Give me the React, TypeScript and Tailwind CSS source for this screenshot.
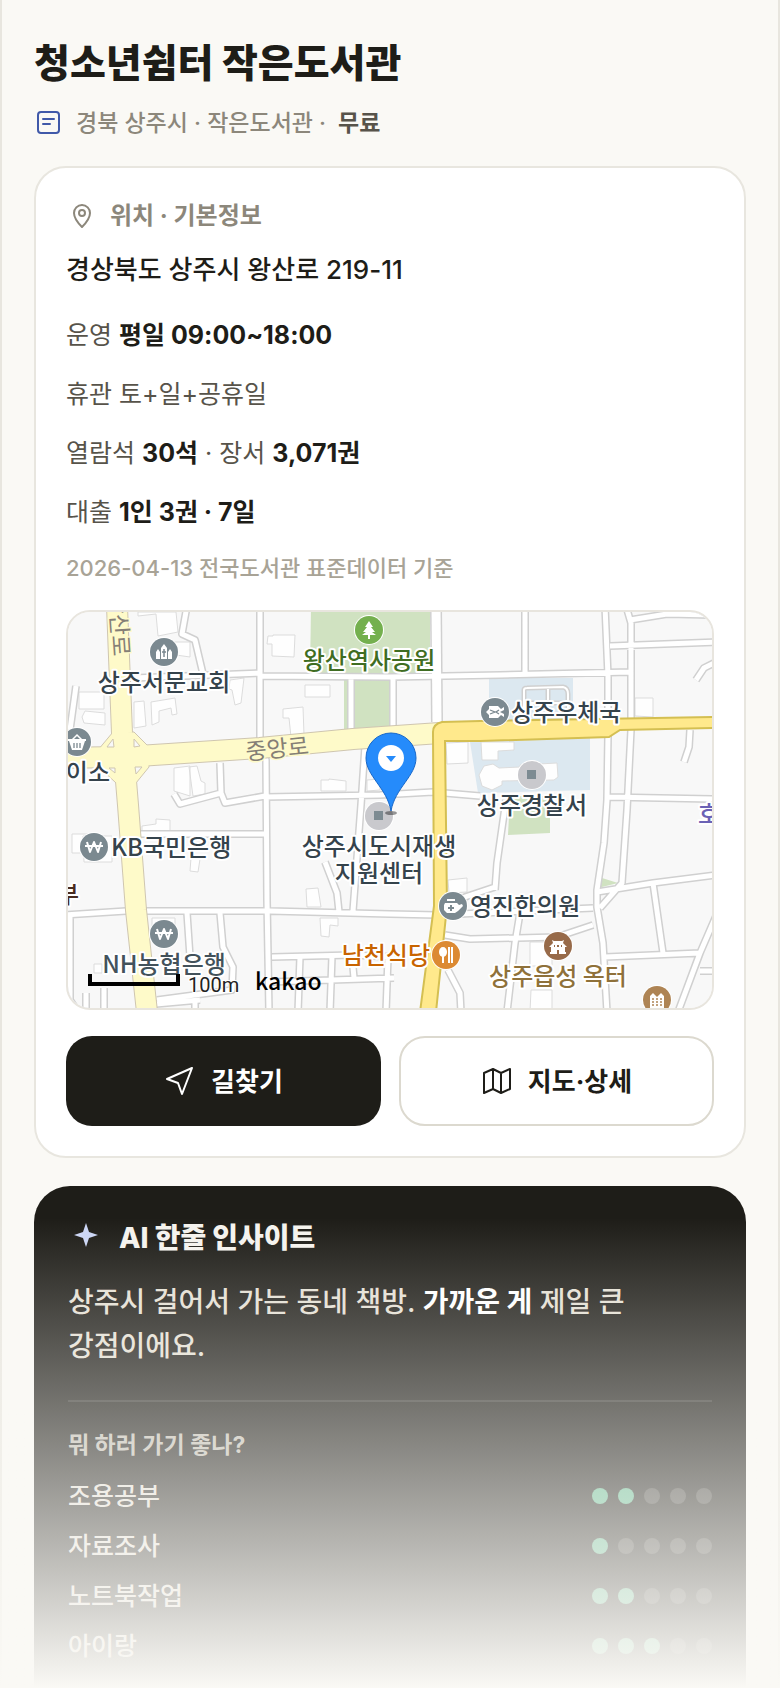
import type { ReactNode } from 'react'

const infoRows: ReactNode[] = [
  <>운영 <b className="font-bold text-[#1e1d18]">평일 09:00~18:00</b></>,
  <>휴관 토+일+공휴일</>,
  <>열람석 <b className="font-bold text-[#1e1d18]">30석</b> · 장서 <b className="font-bold text-[#1e1d18]">3,071권</b></>,
  <>대출 <b className="font-bold text-[#1e1d18]">1인 3권 · 7일</b></>,
]

const ratings = [
  { label: '조용공부', score: 2 },
  { label: '자료조사', score: 1 },
  { label: '노트북작업', score: 2 },
  { label: '아이랑', score: 3 },
]

/* Map data */

const minorRoads = [
  'M260 606V738L266 760L267 900L269 1012',
  'M133 678L260 673M260 676L390 677L500 675L631 672',
  'M187 606L182 634L195 640L203 674',
  'M76 686L70 730',
  'M351 678V730M393 678V726',
  'M525 606V674',
  'M605 606L608 676V735L607 800L604 843L597 890V907L603 943L607 1012',
  'M626 606L631 623V730L627 810L622 883L600 908',
  'M630 620L667 614L712 615',
  'M610 646L716 642',
  'M265 797L380 795L433 792L480 796',
  'M608 797L716 799',
  'M696 680L704 668L716 662M690 730L689 747L684 762',
  'M220 763L221 793L225 803L265 796M221 793L180 804L174 794',
  'M365 746L361 805L353 911',
  'M140 834H267',
  'M64 915L126 911L270 911L390 914L437 915L593 908',
  'M187 913L190 957M220 913L223 947L233 967L232 990L157 1000',
  'M325 862L337 893L339 912',
  'M272 957L352 955L394 957M300 957L298 1012M332 956L330 1012M352 956L354 978M388 957L386 1012M269 982L394 978',
  'M156 1004L200 1000M195 1000V1012',
  'M70 916V1000L78 1012M86 993V1012M104 988V1012',
  'M445 935L470 939L557 937L593 925',
  'M520 913L515 943L507 1012',
  'M506 800L497 863L495 890M495 887L465 897L455 908',
  'M448 970L460 993L461 1012',
  'M597 892L653 883L716 875M653 883L663 953',
  'M605 957L700 953M716 916L700 953L678 1012M700 971H716',
]

const buildings = [
  'M138 612V616L156 614L158 636L178 632L176 612Z',
  'M79 692H104V709H79ZM85 711L105 713V725L84 723L82 717Z',
  'M173 642H190V657L176 655Z',
  'M268 636H273V635H295L294 657L272 656V644H267Z',
  'M305 685H330V697H305Z',
  'M134 702L144 701L146 726L134 728Z',
  'M151 702L175 698L177 714L172 715L171 708L159 711V722L152 725Z',
  'M230 680L244 678L241 703L235 705L232 690L229 689Z',
  'M283 709L303 707L304 735L291 737L289 718H283Z',
  'M174 768L190 766V796L174 791ZM189 767L197 766L201 781L205 783V794L193 796Z',
  'M321 780H329V779L346 781V791H321Z',
  'M367 780L380 779V790L367 791Z',
  'M72 834H88V853H72ZM83 836H112V862H84Z',
  'M142 826L156 824V819L170 820V831H142Z',
  'M191 858L200 859L198 872L190 871Z',
  'M306 889L318 888L321 907H307Z',
  'M320 918H338V926L330 925L329 937L321 936Z',
  'M94 964H102V973H94Z',
  'M152 918H175V940H152Z',
  'M446 743L468 742V763L447 764Z',
  'M481 742H514V750L498 751V760H482Z',
  'M479 775L484 766L493 764L499 768L520 767V765L557 763L558 777L554 780L502 781V785L492 790L482 786Z',
  'M448 880L467 878V892L449 893Z',
  'M635 698H653V717L635 716Z',
  'M530 942H552V966H530ZM531 990H552V1012H530Z',
]

type PlaceKind = 'church' | 'tree' | 'basket' | 'post' | 'square' | 'won' | 'clinic' | 'food' | 'castle' | 'building'

const places: { x: number; y: number; color: string; kind: PlaceKind }[] = [
  { x: 164, y: 652, color: '#7b8990', kind: 'church' },
  { x: 369, y: 630, color: '#74b04e', kind: 'tree' },
  { x: 77, y: 742, color: '#7b8990', kind: 'basket' },
  { x: 495, y: 712, color: '#7b8990', kind: 'post' },
  { x: 532, y: 775, color: '#c9c9cd', kind: 'square' },
  { x: 94, y: 847, color: '#7b8990', kind: 'won' },
  { x: 379, y: 816, color: '#c9c9cd', kind: 'square' },
  { x: 164, y: 934, color: '#7b8990', kind: 'won' },
  { x: 453, y: 906, color: '#7b8990', kind: 'clinic' },
  { x: 446, y: 955, color: '#dc8a33', kind: 'food' },
  { x: 558, y: 946, color: '#976a49', kind: 'castle' },
  { x: 657, y: 1000, color: '#ae8454', kind: 'building' },
]

const labels: { x: number; y: number; text: string; color?: string; anchor?: 'start' | 'middle' | 'end' }[] = [
  { x: 164, y: 691, text: '상주서문교회' },
  { x: 369, y: 669, text: '왕산역사공원', color: '#3f6d22' },
  { x: 110, y: 781, text: '이소', anchor: 'end' },
  { x: 511, y: 721, text: '상주우체국', anchor: 'start' },
  { x: 532, y: 814, text: '상주경찰서' },
  { x: 111, y: 856, text: 'KB국민은행', anchor: 'start' },
  { x: 379, y: 855, text: '상주시도시재생' },
  { x: 379, y: 882, text: '지원센터' },
  { x: 470, y: 915, text: '영진한의원', anchor: 'start' },
  { x: 430, y: 964, text: '남천식당', color: '#c86400', anchor: 'end' },
  { x: 164, y: 973, text: 'NH농협은행', color: '#43525b' },
  { x: 558, y: 985, text: '상주읍성 옥터', color: '#8f713a' },
  { x: 79, y: 903, text: '부', color: '#4a2c20', anchor: 'end' },
  { x: 698, y: 823, text: '호', color: '#6b62b5', anchor: 'start' },
]

function PlaceGlyph({ kind }: { kind: PlaceKind }) {
  switch (kind) {
    case 'church':
      return (
        <>
          <path d="M-8 7V0L-6-3L-4 0V7ZM8 7V0L6-3L4 0V7ZM-3 7V-4L0-8L3-4V7Z" fill="#fff" />
          <path d="M0-3V5M-2 0H2" stroke="#7b8990" strokeWidth="1.5" />
        </>
      )
    case 'tree':
      return <path d="M0-9L4-3H2L6 2H3L7 5H1V9H-1V5H-7L-3 2H-6L-2-3H-4Z" fill="#fff" />
    case 'basket':
      return (
        <>
          <path d="M-8-1H8L5 8H-5ZM-9-3H9V-1H-9Z" fill="#fff" />
          <path d="M-5-2L0-7L5-2" fill="none" stroke="#fff" strokeWidth="1.5" />
          <path d="M-3 1V6M0 1V6M3 1V6" stroke="#7b8990" strokeWidth="1.3" />
        </>
      )
    case 'post':
      return (
        <>
          <path d="M-9 0L-6-3V-6H3L6-3L9-5V-2L5 0L9 2V5L6 3L3 6H-6V3Z" fill="#fff" />
          <path d="M-5-2L0 0L-5 2M4-2L1 0L4 2" fill="none" stroke="#7b8990" strokeWidth="1.3" />
        </>
      )
    case 'square':
      return <path d="M-5-5H4V4H-5Z" fill="#7d8b92" />
    case 'won':
      return <path d="M-7-5L-4 5L0-5L4 5L7-5M-9-1H9" fill="none" stroke="#fff" strokeWidth="2" strokeLinejoin="round" />
    case 'clinic':
      return (
        <>
          <path d="M-6-7H2V-5H-6ZM-8-3H4L6-1L9-2L10 0L5 5L2 7H-6L-9 4V-1Z" fill="#fff" />
          <path d="M-2-1V5M-5 2H1" stroke="#7b8990" strokeWidth="2" />
        </>
      )
    case 'food':
      return (
        <>
          <ellipse cx="-3" cy="-3" rx="4" ry="5" fill="#fff" />
          <path d="M-3 0V8M3-8V8M6-8V8" stroke="#fff" strokeWidth="2" />
        </>
      )
    case 'castle':
      return (
        <>
          <path d="M-6-6L-4-5H4L6-6L5-3L9 1H7V6H8V8H-8V6H-7V1H-9L-5-3Z" fill="#fff" />
          <path d="M-1 8V4H1V8ZM-4-1H-3V1H-4ZM-1-1H1V1H-1ZM3-1H4V1H3Z" fill="#976a49" />
        </>
      )
    case 'building':
      return (
        <>
          <path d="M-7 8V-4L-4-7L0-3L4-7L7-4V8Z" fill="#fff" />
          <path d="M-5-1H5M-5 2H5M-5 5H5" stroke="#ae8454" strokeWidth="1.5" strokeDasharray="2 2" />
        </>
      )
  }
}

function LibraryMap() {
  return (
    <div className="mt-[26px] h-[400px] overflow-hidden rounded-3xl border-2 border-[#e8e5de] bg-[#f8f8f8]">
      <svg
        viewBox="68 612 644 396"
        preserveAspectRatio="xMidYMid slice"
        className="block h-full w-full font-['Noto_Sans_CJK_KR',sans-serif]"
        role="img"
        aria-label="도서관 주변 지도"
      >
        <rect x="0" y="560" width="800" height="500" fill="#f8f8f8" />

        {/* Parks and public lots */}
        <path d="M311 606H430V674H310ZM344 680H391V726L344 729Z" fill="#d0e2c1" />
        <path d="M510 796H550V833L508 835ZM602 878L618 883L598 888Z" fill="#d0e2c1" />
        <path d="M489 678H573V720H489ZM470 742L590 738V790L478 793Z" fill="#dce8f0" />

        <path d={buildings.join('')} fill="#fefefe" stroke="#dcdcdc" strokeWidth="1" />
        <path d="M524 712V690Q524 688 527 688L563 687Q568 688 568 694V712M548 689V703M527 703H566" fill="none" stroke="#d0d0d0" strokeWidth="5" />
        <path d="M524 712V690Q524 688 527 688L563 687Q568 688 568 694V712M548 689V703M527 703H566" fill="none" stroke="#fff" strokeWidth="2" />

        {/* Side streets */}
        <g fill="none" strokeLinejoin="round">
          <path d={minorRoads.join('')} stroke="#d0d0d0" strokeWidth="8" />
          <path d="M436 606L437 722" stroke="#d0d0d0" strokeWidth="12" />
          <path d={minorRoads.join('')} stroke="#fff" strokeWidth="5" />
          <path d="M436 606L437 722" stroke="#fff" strokeWidth="9" />
        </g>

        {/* Jungang-ro and Wangsan-ro */}
        <g fill="none" strokeLinejoin="round">
          <path d="M117 606L122 733L128 805L136 910L147 1012" stroke="#cfc6b0" strokeWidth="22" />
          <path d="M60 758L123 757L260 748L353 739L440 733" stroke="#cfc6b0" strokeWidth="22" />
          <path d="M98 750L113 732H134L149 747V767L136 783H116L98 766Z" fill="#fefac9" stroke="#cfc6b0" strokeWidth="1" />
          <path d="M117 606L122 733L128 805L136 910L147 1012" stroke="#fefac9" strokeWidth="20" />
          <path d="M60 758L123 757L260 748L353 739L440 733" stroke="#fefac9" strokeWidth="20" />
          <path d="M107 747L113 739L114 747ZM134 739L140 746L134 747ZM135 767H142L136 774ZM109 768L115 773V768Z" fill="#f8f8f8" stroke="#cfc6b0" strokeWidth="1" />
        </g>
        <path d="M436 1012L447 906L445 741L480 741L609 737L620 730L716 728V717L480 721L442 722Q433 724 433 732L434 906L420 1012Z" fill="#ffe98c" stroke="#d4bf52" strokeWidth="2" />

        <g fontSize="23" fontWeight="400" fill="#857f76" stroke="#fefac9" strokeWidth="3" paintOrder="stroke" textAnchor="middle">
          <text transform="translate(278 757) rotate(-6)">중앙로</text>
          <text transform="translate(111 625) rotate(86)">왕산로</text>
        </g>

        {places.map(p => (
          <g key={`${p.x}-${p.y}`} transform={`translate(${p.x} ${p.y})`}>
            <circle r="15" fill="#fff" />
            <circle r="14" fill={p.color} />
            <PlaceGlyph kind={p.kind} />
          </g>
        ))}

        <g fontSize="24" fontWeight="500" stroke="#fff" strokeWidth="4" strokeLinejoin="round" paintOrder="stroke">
          {labels.map(l => (
            <text key={l.text} x={l.x} y={l.y} fill={l.color ?? '#35434c'} textAnchor={l.anchor ?? 'middle'}>
              {l.text}
            </text>
          ))}
        </g>

        {/* Library pin */}
        <ellipse cx="391" cy="813" rx="6" ry="2" fill="#000" opacity="0.4" />
        <path d="M391 811C387 788 366 776 366 758A25 25 0 0 1 416 758C416 776 395 788 391 811Z" fill="#258bfb" stroke="#1667c9" strokeWidth="1" />
        <circle cx="391" cy="758" r="13" fill="#fff" />
        <path d="M386 756H396L391 762Z" fill="#258bfb" />

        {/* Scale and provider */}
        <path d="M90 974V984H178V974" fill="none" stroke="#000" strokeWidth="4" />
        <text x="188" y="992" fontSize="20" className="font-['Roboto']" fill="#222" stroke="#fff" strokeWidth="2" paintOrder="stroke">100m</text>
        <text x="255" y="990" fontSize="23" fontWeight="500" fill="#000">kakao</text>
      </svg>
    </div>
  )
}

function ScoreDots({ score }: { score: number }) {
  return (
    <span className="flex gap-[10px]" role="img" aria-label={`5점 중 ${score}점`}>
      {[1, 2, 3, 4, 5].map(n => (
        <span key={n} className={`h-4 w-4 rounded-full ${n <= score ? 'bg-[#5fb78d]' : 'bg-[#45443f]'}`} />
      ))}
    </span>
  )
}

export default function App() {
  return (
    <main className="relative border-x-2 border-[#e8e6df] bg-[#faf9f5] px-8 pt-[34px] font-['Inter','Noto_Sans_CJK_KR',sans-serif] text-[#1e1d18]">
      <h1 className="text-[39px] leading-[58px] font-extrabold">청소년쉼터 작은도서관</h1>
      <div className="mt-[14px] flex items-center text-[23px] leading-[34px] font-medium text-[#8c877b]">
        <svg className="mr-3 h-[30px] w-[30px]" viewBox="0 0 30 30" fill="none" stroke="#4059a9" strokeWidth="2" strokeLinecap="round">
          <rect x="4" y="4" width="21" height="21" rx="3" />
          <path d="M9 11H20M9 16H16" />
        </svg>
        <span>경북 상주시 · 작은도서관 ·</span>
        <b className="ml-3 font-bold text-[#57534a]">무료</b>
      </div>

      {/* Location card */}
      <section className="mt-[26px] rounded-[32px] border-2 border-[#e8e6df] bg-white p-[30px]">
        <h2 className="flex items-center text-2xl leading-9 font-bold text-[#8c877b]">
          <svg className="mr-[14px] h-[30px] w-[30px]" viewBox="0 0 30 30" fill="none" stroke="currentColor" strokeWidth="2" strokeLinejoin="round">
            <path d="M16 26C12 22 8 17 8 12A8 8 0 0 1 24 12C24 17 20 22 16 26Z" />
            <circle cx="16" cy="12" r="3" />
          </svg>
          위치 · 기본정보
        </h2>
        <p className="mt-4 text-[26px] leading-10 font-medium">경상북도 상주시 왕산로 219-11</p>
        <ul className="mt-6 flex flex-col gap-4 text-[25px] leading-[43px] text-[#57534a]">
          {infoRows.map((row, i) => (
            <li key={i}>{row}</li>
          ))}
        </ul>
        <p className="mt-[18px] text-[22px] leading-8 font-medium text-[#a8a396]">2026-04-13 전국도서관 표준데이터 기준</p>

        <LibraryMap />

        <div className="mt-[26px] grid grid-cols-2 gap-[18px] text-[26px] font-bold">
          <a href="#directions" className="flex h-[90px] items-center justify-center gap-[15px] rounded-[26px] bg-[#1e1d18] text-white">
            <svg className="h-8 w-8" viewBox="0 0 32 32" fill="none" stroke="currentColor" strokeWidth="2" strokeLinejoin="round">
              <path d="M28 3L3 14L14 18L18 29Z" />
            </svg>
            길찾기
          </a>
          <a href="#detail" className="flex h-[90px] items-center justify-center gap-[15px] rounded-[26px] border-2 border-[#dcd9cf] bg-white">
            <svg className="h-8 w-8" viewBox="0 0 32 32" fill="none" stroke="currentColor" strokeWidth="2" strokeLinejoin="round">
              <path d="M3 8L12 4L20 8L29 4V24L20 28L12 24L3 28ZM12 4V24M20 8V28" />
            </svg>
            지도·상세
          </a>
        </div>
      </section>

      {/* AI insight */}
      <section className="mt-7 rounded-t-[36px] bg-[#1e1d18] px-[34px] pt-[34px] pb-[25px]">
        <h2 className="flex items-center text-[28px] leading-[34px] font-extrabold text-[#f5f3ee]">
          <svg className="mr-[15px] h-9 w-9" viewBox="0 0 36 36" fill="#cbd6f5">
            <path d="M18 3L21 12L30 15L21 18L18 27L15 18L6 15L15 12Z" />
          </svg>
          AI 한줄 인사이트
        </h2>
        <p className="mt-6 text-[28px] leading-[44px] font-medium break-keep text-[#e3dfd3]">
          상주시 걸어서 가는 동네 책방. <b className="font-bold text-white">가까운 게</b> 제일 큰 강점이에요.
        </p>
        <div className="mt-8 border-t-2 border-[#373631] pt-[27px]">
          <h3 className="text-[23px] leading-8 font-bold text-[#bfbbb0]">뭐 하러 가기 좋나?</h3>
          <ul className="mt-[18px] flex flex-col gap-4">
            {ratings.map(r => (
              <li key={r.label} className="flex items-center justify-between text-[25px] leading-[34px] font-medium text-[#e3dfd6]">
                {r.label}
                <ScoreDots score={r.score} />
              </li>
            ))}
          </ul>
        </div>
      </section>

      <div className="pointer-events-none absolute -inset-x-[2px] bottom-0 h-[470px] bg-linear-to-b from-[#faf9f5]/0 to-[#faf9f5]" />
    </main>
  )
}
